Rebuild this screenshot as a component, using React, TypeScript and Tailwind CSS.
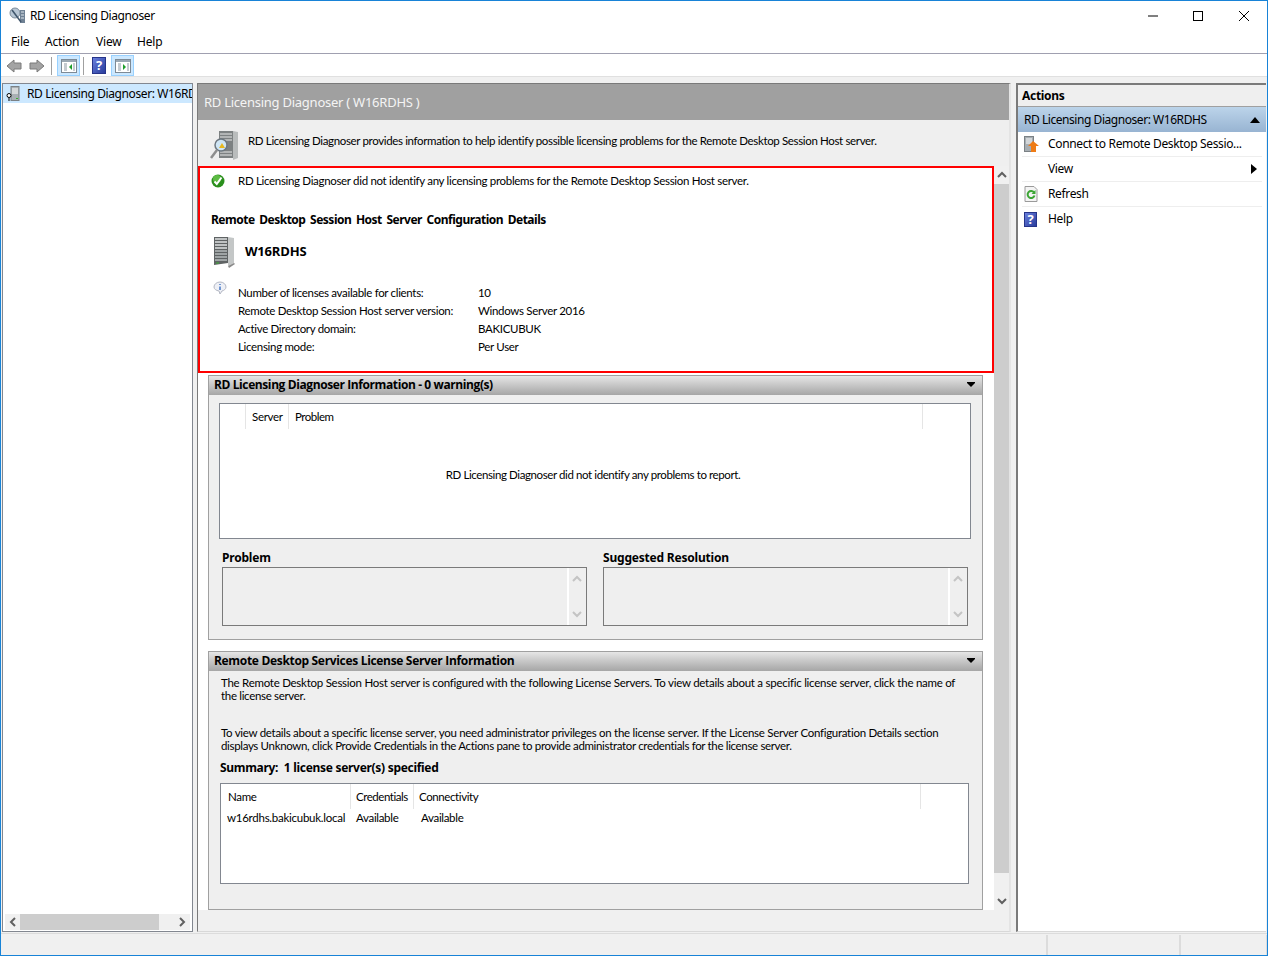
import React from 'react'

const SERVER_ROWS = [
  ['Number of licenses available for clients:', '10'],
  ['Remote Desktop Session Host server version:', 'Windows Server 2016'],
  ['Active Directory domain:', 'BAKICUBUK'],
  ['Licensing mode:', 'Per User'],
]

function ServerIcon({ className }: { className?: string }) {
  return (
    <svg viewBox="0 0 22 32" className={className}>
      <path d="M1 1h14v26l-14 2z" fill="#5f6364" />
      <path d="M15 1l6 1v25l-6 3z" fill="#c4c7c7" />
      <path d="M2 3h12M2 6h12M2 9h12M2 12h12" stroke="#dfe2e2" strokeWidth="1.300" />
      <path d="M2 15h12M2 18h12M2 21h12M2 24h12" stroke="#b5baba" strokeWidth="1.300" />
      <path d="M3 27h3" stroke="#38b030" />
      <path d="M15 30l6-3 1 1-6 4z" fill="#8a8a8a" />
    </svg>
  )
}

function CheckIcon() {
  return (
    <svg viewBox="0 0 14 14" className="w-[14px] h-[14px] shrink-0">
      <circle cx="7" cy="7" r="6.500" fill="#2a8f1c" />
      <circle cx="6" cy="5" r="4" fill="#5dbb44" />
      <path d="M3.500 7.500l2.300 2.500L10.500 3.500" fill="none" stroke="#fff" strokeWidth="2" />
    </svg>
  )
}

function InfoIcon() {
  return (
    <svg viewBox="0 0 14 14" className="w-[14px] h-[14px]">
      <path d="M7 1a6 5 0 0 1 6 5c0 2-2 3.500-4 4l-2 3-1-3C3 9.500 1 8 1 6a6 5 0 0 1 6-5z" fill="#eef0f6" stroke="#b4b8c4" />
      <path d="M7 3v1M7 5.500V9" stroke="#3a6fc4" strokeWidth="1.400" />
    </svg>
  )
}

function HelpIcon({ size }: { size: string }) {
  return (
    <div className={`${size} bg-gradient-to-br from-[#6a7fdc] to-[#2a3c9c] border border-[#26348a] flex items-center justify-center text-white font-bold text-[13px] leading-none`}>
      ?
    </div>
  )
}

function ArrowIcon({ flip }: { flip?: boolean }) {
  return (
    <svg viewBox="0 0 16 14" className={`w-4 h-[14px] ${flip ? '-scale-x-100' : ''}`}>
      <path d="M1 7l7-6v3h7v6H8v3z" fill="#a3a3a3" stroke="#7b7b7b" />
    </svg>
  )
}

function PaneToggleIcon({ right }: { right?: boolean }) {
  return (
    <svg viewBox="0 0 16 14" className="w-4 h-[14px]">
      <rect x="0.500" y="0.500" width="15" height="13" fill="#fff" stroke="#7d8a96" />
      <rect x="1" y="1" width="14" height="2" fill="#9aa8b4" />
      <path d="M3 5h3M3 7h3M3 9h3M3 11h3M12 5h2M12 7h2M12 9h2M12 11h2" stroke="#8a97a3" />
      {right ? <path d="M8 5l3 3-3 3z" fill="#1f9e2c" /> : <path d="M11 5L8 8l3 3z" fill="#1f9e2c" />}
    </svg>
  )
}

function ScrollChevron({ dir, muted }: { dir: 'up' | 'down' | 'left' | 'right'; muted?: boolean }) {
  const paths = {
    up: 'M1 6l4-4 4 4',
    down: 'M1 2l4 4 4-4',
    left: 'M6 1L2 5l4 4',
    right: 'M2 1l4 4-4 4',
  }
  return (
    <svg viewBox={dir === 'up' || dir === 'down' ? '0 0 10 8' : '0 0 8 10'} className={dir === 'up' || dir === 'down' ? 'w-[10px] h-2' : 'w-2 h-[10px]'}>
      <path d={paths[dir]} fill="none" stroke={muted ? '#c4c4c4' : '#606060'} strokeWidth="2" />
    </svg>
  )
}

function PanelHeader({ title, tracking }: { title: string; tracking: string }) {
  return (
    <div className="h-[19px] shrink-0 bg-gradient-to-b from-[#e6e6e6] to-[#a6a6a6] flex items-center justify-between pl-[5px] pr-[7px] pb-[1px]">
      <span className={`text-[12px] font-bold font-['Open_Sans',sans-serif] ${tracking} text-black leading-none`}>{title}</span>
      <svg viewBox="0 0 8 6" className="w-2 h-[6px]">
        <path d="M0 0h8v1L4 5 0 1z" fill="#000" />
      </svg>
    </div>
  )
}

function ReadonlyBox({ title, className }: { title: string; className?: string }) {
  return (
    <div className={`w-[365px] ${className ?? ''}`}>
      <div className="h-[16px] text-[12px] font-bold font-['Noto_Sans',sans-serif] leading-[16px] text-black tracking-[-0.2px]">{title}</div>
      <div className="h-[59px] mt-[1px] border border-[#7a7a7a] flex justify-end">
        <div className="w-[18px] mr-[1px] border-l-2 border-white flex flex-col items-center justify-between py-[7px]">
          <ScrollChevron dir="up" muted />
          <ScrollChevron dir="down" muted />
        </div>
      </div>
    </div>
  )
}

function ActionRow({ icon, label, arrow, last }: { icon?: React.ReactNode; label: string; arrow?: boolean; last?: boolean }) {
  return (
    <div className={`h-[25px] mx-[4px] flex items-center border-b ${last ? 'border-transparent' : 'border-[#eeeeee]'}`}>
      <div className="w-[26px] pl-[2px] flex items-center">{icon}</div>
      <span className="text-[12px] tracking-[-0.35px] text-black flex-1">{label}</span>
      {arrow && (
        <svg viewBox="0 0 6 10" className="w-[6px] h-[10px] mr-[5px]">
          <path d="M0 0l6 5-6 5z" fill="#000" />
        </svg>
      )}
    </div>
  )
}

export default function App() {
  return (
    <div className="w-[1268px] h-[956px] border border-[#1883d7] bg-[#f0f0f0] flex flex-col overflow-hidden font-['Noto_Sans','Liberation_Sans',sans-serif] text-[12px] text-black">
      {/* title bar */}
      <div className="h-[30px] shrink-0 bg-white flex items-center pl-[8px]">
        <svg viewBox="0 0 18 18" className="w-[18px] h-[18px]">
          <circle cx="6" cy="6" r="5" fill="#b7c6d4" stroke="#7d8d9c" />
          <path d="M11 3h5v13h-5z" fill="#6f8194" />
          <path d="M12 5h3M12 8h3M12 11h3" stroke="#dfe6ec" />
          <path d="M3 3l9 12" stroke="#40566c" strokeWidth="1.500" />
        </svg>
        <span className="ml-[3px] tracking-[-0.4px]">RD Licensing Diagnoser</span>
        <div className="ml-auto flex items-center pr-[18px]">
          <svg viewBox="0 0 10 10" className="w-[10px] h-[10px]"><path d="M0 5h10" stroke="#000" /></svg>
          <svg viewBox="0 0 10 10" className="w-[10px] h-[10px] ml-[35px]"><rect x="0.500" y="0.500" width="9" height="9" fill="none" stroke="#000" /></svg>
          <svg viewBox="0 0 10 10" className="w-[10px] h-[10px] ml-[36px]"><path d="M0 0l10 10M10 0L0 10" stroke="#000" /></svg>
        </div>
      </div>

      {/* menu bar */}
      <div className="h-[23px] shrink-0 bg-white border-b border-[#a0a0b0] flex items-center pl-[10px] pb-[1px] tracking-[-0.2px]">
        <span className="w-[34px]">File</span>
        <span className="w-[51px]">Action</span>
        <span className="w-[41px]">View</span>
        <span>Help</span>
      </div>

      {/* toolbar */}
      <div className="h-[23px] shrink-0 bg-white border-b border-[#e0e0e0] flex items-center pl-[5px] pt-[1px]">
        <ArrowIcon />
        <div className="ml-[7px]"><ArrowIcon flip /></div>
        <div className="w-px h-[18px] bg-[#a0a0a0] ml-[6px]" />
        <div className="ml-[5px] w-[23px] h-[21px] bg-[#cce8ff] border border-[#99d1ff] flex items-center justify-center"><PaneToggleIcon /></div>
        <div className="w-px h-[18px] bg-[#a0a0a0] ml-[3px]" />
        <div className="ml-[8px]"><HelpIcon size="w-[14px] h-[17px]" /></div>
        <div className="ml-[5px] w-[23px] h-[21px] bg-[#cce8ff] border border-[#99d1ff] flex items-center justify-center"><PaneToggleIcon right /></div>
      </div>

      {/* panes */}
      <div className="h-[849px] mt-[6px] shrink-0 flex pl-[1px]">
        {/* tree */}
        <div className="w-[191px] border border-[#828790] bg-white flex flex-col">
          <div className="h-[19px] bg-[#cce8ff] flex items-center pl-[3px] overflow-hidden whitespace-nowrap">
            <svg viewBox="0 0 14 16" className="w-[14px] h-[16px] shrink-0">
              <rect x="5" y="0.500" width="8" height="14" fill="#a9b0b4" stroke="#7b8185" />
              <path d="M6 3h6M6 5h6M6 7h6" stroke="#fff" />
              <circle cx="3" cy="9.500" r="2" fill="#fff" stroke="#000" />
              <path d="M3 11.500V15" stroke="#000" />
              <rect x="10" y="12" width="2" height="1" fill="#38b030" />
            </svg>
            <span className="ml-[7px] tracking-[-0.4px]">RD Licensing Diagnoser: W16RDHS</span>
          </div>
          <div className="flex-1" />
          <div className="h-[16px] mx-[2px] mb-[1px] bg-[#f0f0f0] flex items-center">
            <div className="w-[15px] flex justify-center"><ScrollChevron dir="left" /></div>
            <div className="w-[139px] h-full bg-[#cdcdcd]" />
            <div className="ml-auto w-[17px] flex justify-center"><ScrollChevron dir="right" /></div>
          </div>
        </div>

        {/* center */}
        <div className="w-[814px] ml-[4px] border-l border-t border-[#7a7a7a] border-r-2 border-r-[#e4e4e4] border-b border-b-[#d8d8d8] flex flex-col font-['Lato','Liberation_Sans',sans-serif] text-[11.5px] tracking-[-0.32px]">
          <div className="h-[36px] shrink-0 bg-[#a0a0a0] text-[#f4f4f4] text-[13px] tracking-[-0.25px] flex items-center pl-[6px] pt-[1px] font-['Noto_Sans',sans-serif]">RD Licensing Diagnoser ( W16RDHS )</div>
          <div className="h-[46px] shrink-0 bg-[#efefef] flex pl-[12px] pt-[10px]">
            <svg viewBox="0 0 30 32" className="w-[30px] h-[32px] shrink-0">
              <path d="M9 1h14v27H9z" fill="#7d8182" />
              <path d="M23 1l5 1v26l-5 2z" fill="#b9bcbc" />
              <path d="M10 4h12M10 7h12M10 10h12M10 22h12M10 25h12" stroke="#e8e8e8" />
              <circle cx="11" cy="15" r="6" fill="#cfe6f5" stroke="#6d7780" strokeWidth="1.500" />
              <path d="M7 20l-6 8" stroke="#8e8e8e" strokeWidth="2.500" />
              <path d="M12 13l3 5h-6z" fill="#e8b820" />
            </svg>
            <span className="ml-[8px] leading-[22px] tracking-[-0.35px]">RD Licensing Diagnoser provides information to help identify possible licensing problems for the Remote Desktop Session Host server.</span>
          </div>

          <div className="h-[765px] shrink-0 flex">
            {/* scrolled content */}
            <div className="w-[796px] h-[744px] bg-white flex flex-col">
              <div className="h-[207px] shrink-0 border-2 border-[#ff0000] pl-[11px]">
                <div className="h-[24px] flex items-center pt-[2px]">
                  <CheckIcon />
                  <span className="ml-[13px]">RD Licensing Diagnoser did not identify any licensing problems for the Remote Desktop Session Host server.</span>
                </div>
                <div className="mt-[19px] h-[18px] leading-[18px] font-bold text-[12px] font-['Noto_Sans',sans-serif] tracking-[-0.5px] [word-spacing:2px]">Remote Desktop Session Host Server Configuration Details</div>
                <div className="mt-[7px] h-[32px] flex items-center pl-[2px]">
                  <ServerIcon className="w-[22px] h-[32px]" />
                  <span className="ml-[10px] font-bold text-[13px] font-['Open_Sans',sans-serif] tracking-[-0.2px]">W16RDHS</span>
                </div>
                <div className="mt-[12px] flex">
                  <div className="w-[27px] pl-[2px] pt-[1px]"><InfoIcon /></div>
                  <div className="mt-[4px] grid grid-cols-[240px_1fr] auto-rows-[18px] items-center">
                    {SERVER_ROWS.map(([label, value]) => (
                      <React.Fragment key={label}>
                        <span className="whitespace-nowrap">{label}</span>
                        <span>{value}</span>
                      </React.Fragment>
                    ))}
                  </div>
                </div>
              </div>

              <div className="ml-[10px] mt-[2px] h-[265px] shrink-0 w-[775px] border border-[#a0a0a0] bg-[#efefef] flex flex-col">
                <PanelHeader title="RD Licensing Diagnoser Information - 0 warning(s)" tracking="tracking-[-0.4px]" />
                <div className="mt-[8px] ml-[10px] w-[752px] h-[136px] border border-[#828790] bg-white flex flex-col">
                  <div className="h-[25px] flex leading-[25px]">
                    <div className="w-[26px] border-r border-[#e5e5e5]" />
                    <div className="w-[43px] pl-[6px] border-r border-[#e5e5e5]">Server</div>
                    <div className="w-[634px] pl-[6px] border-r border-[#e5e5e5] tracking-[-0.5px]">Problem</div>
                  </div>
                  <div className="flex-1 flex justify-center pt-[37px] pr-[4px] tracking-[-0.4px]">RD Licensing Diagnoser did not identify any problems to report.</div>
                </div>
                <div className="mt-[11px] ml-[13px] flex">
                  <ReadonlyBox title="Problem" />
                  <ReadonlyBox title="Suggested Resolution" className="ml-[16px]" />
                </div>
              </div>

              <div className="ml-[10px] mt-[11px] h-[259px] shrink-0 w-[775px] border border-[#a0a0a0] bg-[#efefef] flex flex-col">
                <PanelHeader title="Remote Desktop Services License Server Information" tracking="tracking-[-0.32px]" />
                <div className="pl-[12px] pt-[5px] leading-[13px]">
                  <div className="whitespace-nowrap tracking-[-0.26px]">The Remote Desktop Session Host server is configured with the following License Servers. To view details about a specific license server, click the name of</div>
                  <div>the license server.</div>
                  <div className="mt-[24px] whitespace-nowrap tracking-[-0.29px]">To view details about a specific license server, you need administrator privileges on the license server. If the License Server Configuration Details section</div>
                  <div className="whitespace-nowrap tracking-[-0.34px]">displays Unknown, click Provide Credentials in the Actions pane to provide administrator credentials for the license server.</div>
                </div>
                <div className="ml-[11px] mt-[8px] h-[16px] leading-[16px] font-bold text-[12px] font-['Noto_Sans',sans-serif] tracking-[-0.3px]">Summary:&nbsp; 1 license server(s) specified</div>
                <div className="mt-[7px] ml-[11px] w-[749px] h-[101px] border border-[#828790] bg-white flex flex-col">
                  <div className="h-[25px] flex leading-[25px]">
                    <div className="w-[130px] pl-[7px] border-r border-[#e5e5e5]">Name</div>
                    <div className="w-[63px] pl-[5px] border-r border-[#e5e5e5] whitespace-nowrap tracking-[-0.45px]">Credentials</div>
                    <div className="w-[507px] pl-[5px] border-r border-[#e5e5e5] tracking-[-0.4px]">Connectivity</div>
                  </div>
                  <div className="flex h-[18px] leading-[18px]">
                    <div className="w-[130px] pl-[6px] whitespace-nowrap tracking-[-0.26px]">w16rdhs.bakicubuk.local</div>
                    <div className="w-[64px] pl-[5px]">Available</div>
                    <div className="pl-[6px]">Available</div>
                  </div>
                </div>
              </div>
            </div>

            {/* vertical scrollbar */}
            <div className="w-[15px] h-full bg-[#f0f0f0] flex flex-col items-center">
              <div className="h-[18px] flex items-center"><ScrollChevron dir="up" /></div>
              <div className="w-full h-[689px] bg-[#cdcdcd]" />
              <div className="pt-[24px]"><ScrollChevron dir="down" /></div>
            </div>
          </div>
        </div>

        {/* actions */}
        <div className="w-[250px] ml-[5px] border-l-2 border-t-2 border-[#7a7a7a] border-b border-b-[#d8d8d8] bg-white flex flex-col">
          <div className="h-[22px] bg-[#efefef] border-b border-[#a0a0a0] flex items-center pl-[4px] font-bold tracking-[-0.3px]">Actions</div>
          <div className="h-[25px] bg-gradient-to-b from-[#bcd4ea] to-[#98b4d2] flex items-center justify-between pl-[6px] pr-[6px]">
            <span className="tracking-[-0.45px]">RD Licensing Diagnoser: W16RDHS</span>
            <svg viewBox="0 0 10 6" className="w-[10px] h-[6px]"><path d="M5 0l5 6H0z" fill="#000" /></svg>
          </div>
          <ActionRow
            label="Connect to Remote Desktop Sessio..."
            icon={
              <svg viewBox="0 0 15 16" className="w-[15px] h-[16px]">
                <rect x="0.500" y="0.500" width="9" height="15" fill="#a6adb2" stroke="#7b8185" />
                <path d="M2 3h6M2 5h6M2 7h6" stroke="#fff" />
                <path d="M9 5l6 5h-3v6H7v-6H4z" fill="#ee7b16" />
              </svg>
            }
          />
          <ActionRow label="View" arrow />
          <ActionRow
            label="Refresh"
            icon={
              <svg viewBox="0 0 14 16" className="w-[14px] h-[16px]">
                <path d="M1 .5h9l3 3v12H1z" fill="#f4f4f4" stroke="#9a9a9a" />
                <path d="M10 6.500a3.500 3.500 0 1 0 .5 3" fill="none" stroke="#3ba534" strokeWidth="2" />
                <path d="M11.500 4v4h-4z" fill="#3ba534" />
              </svg>
            }
          />
          <ActionRow label="Help" last icon={<HelpIcon size="w-[13px] h-[15px]" />} />
        </div>
      </div>

      {/* status bar */}
      <div className="flex-1 mt-[1px] border-t border-[#dcdcdc] flex justify-end">
        <div className="w-[133px] border-l-2 border-[#dcdcdc] mt-[1px]" />
        <div className="w-[88px] border-l-2 border-r border-[#dcdcdc] mt-[1px]" />
      </div>
    </div>
  )
}
